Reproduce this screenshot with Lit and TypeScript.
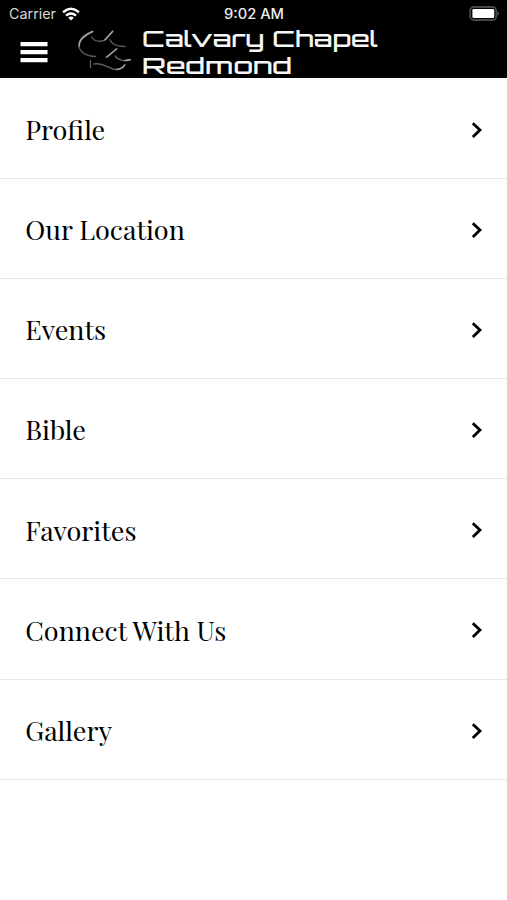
import { LitElement, html, css } from "lit";
import { customElement, property } from "lit/decorators.js";

const ITEMS = ["Profile", "Our Location", "Events", "Bible", "Favorites", "Connect With Us", "Gallery"];

@customElement("status-bar")
class StatusBar extends LitElement {
  static styles = css`
    :host { display: grid; grid-template-columns: 1fr auto 1fr; align-items: center; height: 27px; padding: 0 7px 0 9px; box-sizing: border-box; color: #e4e4e4; font: 14px/27px Inter, "Liberation Sans", sans-serif; }
    .left { display: flex; align-items: center; gap: 5px; }
    .right { display: flex; justify-content: flex-end; }
    .time { font-weight: 500; }
    svg { display: block; }
  `;
  render() {
    return html`
      <div class="left">
        <svg width="48" height="27"><text x="0" y="18.5" textLength="47" lengthAdjust="spacingAndGlyphs" fill="#d8d8d8">Carrier</text></svg>
        <svg width="18" height="14" viewBox="0 0 19 15" fill="none" stroke="#fff" stroke-width="2.6">
          <path d="M1 5.6Q9.5 -1.6 18 5.6"/><path d="M4.2 9.2Q9.5 4.6 14.8 9.2"/><path d="M6.5 11.4Q9.5 8.9 12.5 11.4L9.5 14.5Z" fill="#fff" stroke="none"/>
        </svg>
      </div>
      <svg class="time" width="61" height="27"><text x="0" y="18.5" textLength="60" lengthAdjust="spacingAndGlyphs" fill="#ececec">9:02 AM</text></svg>
      <div class="right">
        <svg width="31" height="15" viewBox="0 0 31 15">
          <rect x="1.2" y="1" width="26" height="13" rx="3.5" fill="#000" stroke="#484848" stroke-width="1.8"/>
          <rect x="3.4" y="3" width="21.8" height="9" rx="1.2" fill="#fff"/>
          <path d="M28.5 5Q31.5 7.5 28.5 10Z" fill="#5a5a5a"/>
        </svg>
      </div>`;
  }
}

@customElement("brand-bar")
class BrandBar extends LitElement {
  static styles = css`
    :host { display: flex; align-items: flex-start; height: 51px; padding-left: 20px; }
    svg { display: block; flex: none; }
    .menu { margin: 14px 29px 0 0; }
    .word { margin-left: 7px; overflow: visible; font-family: Orbitron, "DejaVu Sans", sans-serif; font-size: 22px; font-weight: 500; }
  `;
  render() {
    return html`
      <svg class="menu" width="28" height="22" viewBox="0 0 28 22" fill="#fff"><path d="M.5 1H27.5V5.2H.5ZM.5 9H27.5V13.2H.5ZM.5 17H27.5V21.2H.5Z"/></svg>
      <svg width="58" height="51" viewBox="77 27 58 51" fill="none" stroke-linecap="round">
        <g stroke="#5c5c5c" stroke-width="1.4">
          <path d="M93 31.500C85 34 79 39 79 46C79.500 52 86 56 95.500 56.500"/>
          <path d="M91.500 37C94 41 99 42 104 40.500L113 31"/>
          <path d="M110 40C112 45 117 46.500 125 46.500"/>
          <path d="M106 57.500L117 48.500"/>
          <path d="M115 56C119 61 126 61.500 130.500 59.500"/>
          <path d="M94 64C105 62 109 70 117 69.500Q123 68.500 125 64.500"/>
          <path d="M90.500 60.500V67.500"/>
        </g>
        <g stroke="#a8a8a8" stroke-width="1.4">
          <path d="M92.500 31.500C85 35 79 39 79 46"/>
          <path d="M105 40L112.500 31.500"/>
          <path d="M107 57L116.500 49"/>
          <path d="M117 69.500Q123 68.500 124.500 65"/>
          <path d="M125 60.500L130 59.800"/>
        </g>
      </svg>
      <svg class="word" width="250" height="51" fill="#f6f6f6">
        <text x="0" y="20" textLength="236" lengthAdjust="spacingAndGlyphs">Calvary Chapel</text>
        <text x="0" y="46.500" textLength="150" lengthAdjust="spacingAndGlyphs">Redmond</text>
      </svg>`;
  }
}

@customElement("menu-row")
class MenuRow extends LitElement {
  @property() label = "";
  static styles = css`
    :host { display: flex; align-items: center; justify-content: space-between; height: 100.17px; box-sizing: border-box; padding: 3px 24px 0 25.3px; border-bottom: 1px solid #e9e9e9; }
    svg { display: block; }
    .label { padding-bottom: 1.6px; font-family: "Playfair Display", "Liberation Serif", serif; font-size: 27px; line-height: 44px; color: #000; white-space: nowrap; }
  `;
  render() {
    return html`
      <span class="label">${this.label}</span>
      <svg width="12" height="18" viewBox="0 0 12 18" fill="none" stroke="#000" stroke-width="2.8"><path d="M1.8 2.2L9 9.1L1.8 16"/></svg>`;
  }
}

@customElement("app-root")
class AppRoot extends LitElement {
  static styles = css`
    :host { display: block; height: 900px; background: #fff; overflow: hidden; }
    .top { background: #000; height: 78px; }
    .list { display: flex; flex-direction: column; padding-top: 0.6px; }
  `;
  render() {
    return html`
      <header class="top"><status-bar></status-bar><brand-bar></brand-bar></header>
      <nav class="list">${ITEMS.map((label) => html`<menu-row .label=${label}></menu-row>`)}</nav>`;
  }
}
